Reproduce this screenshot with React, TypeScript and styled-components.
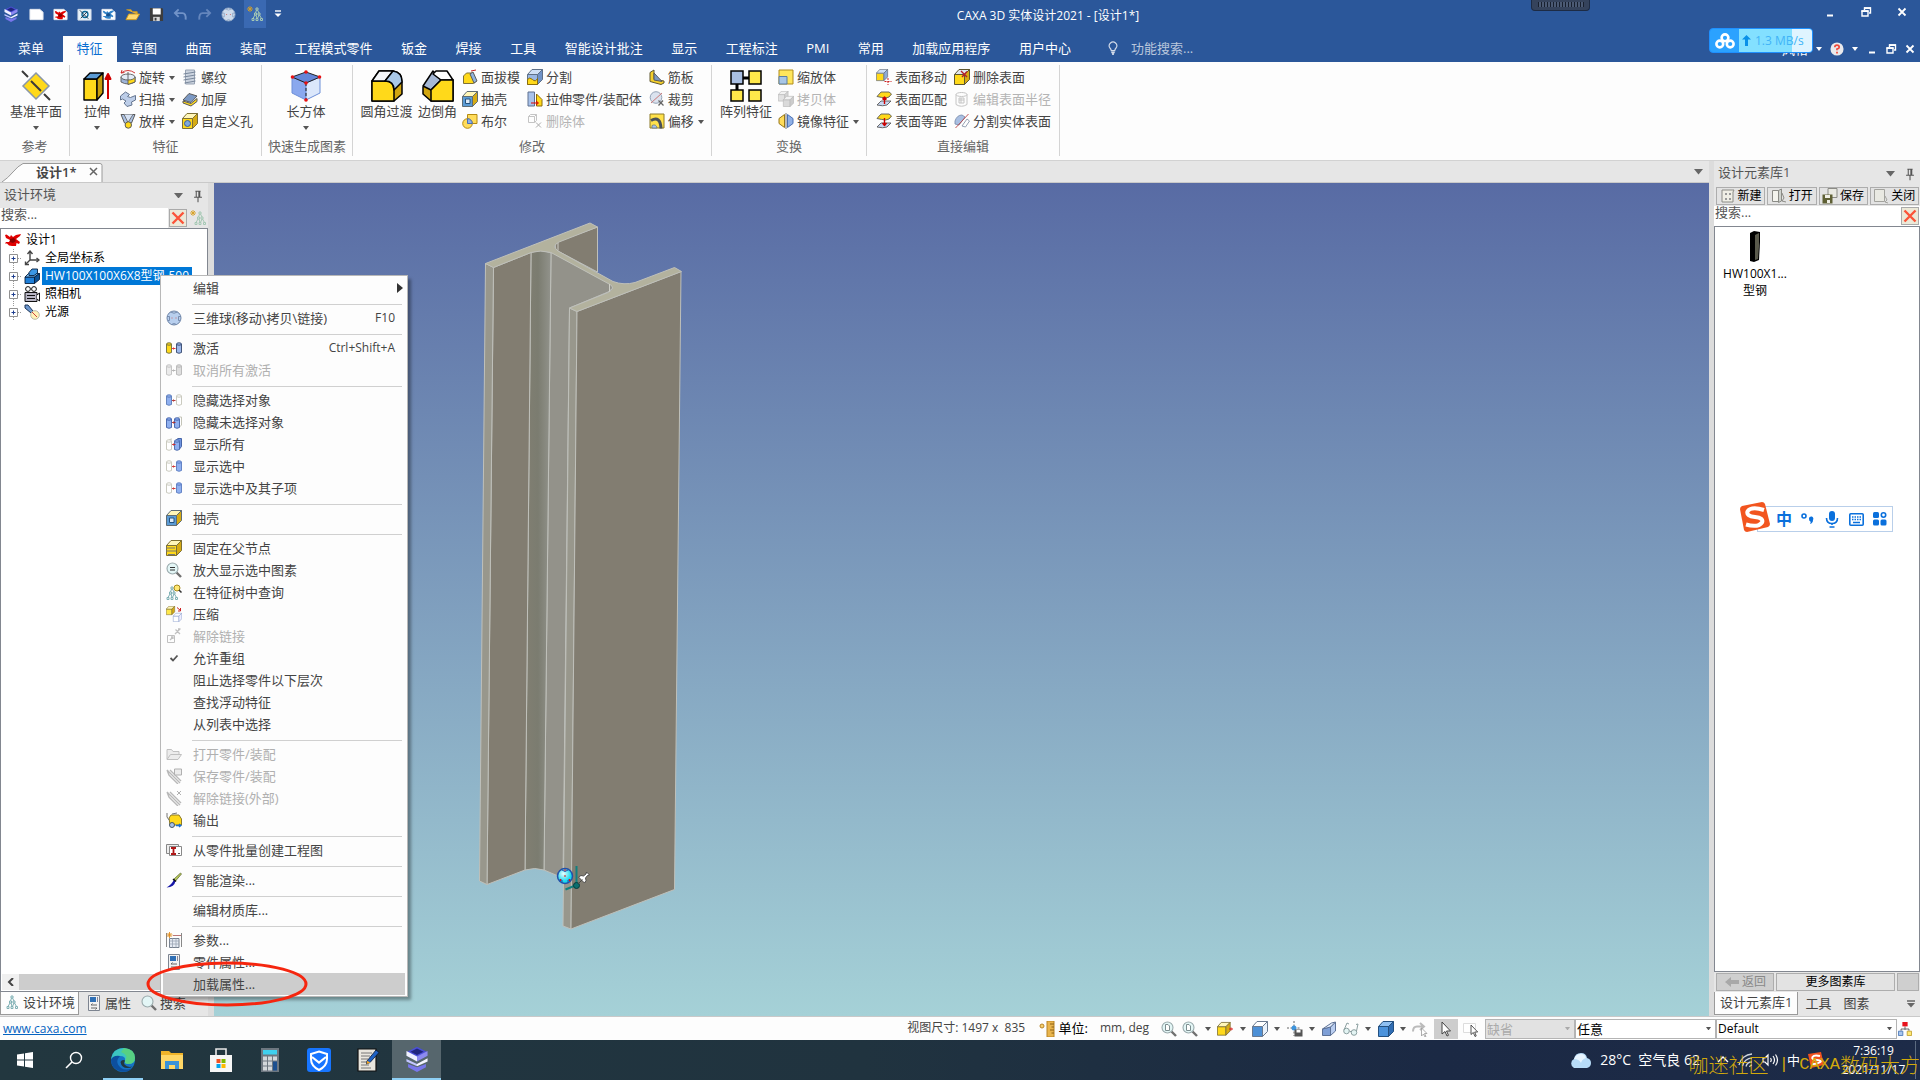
import React from "react";
import styled, { createGlobalStyle, css } from "styled-components";

const GlobalStyle = createGlobalStyle`
  *, *::before, *::after { box-sizing: border-box; }
  html, body { margin: 0; padding: 0; height: 100%; overflow: hidden; }
  body, button, input, select {
    font-family: "Open Sans", "Noto Sans CJK SC", sans-serif;
    font-size: 13px;
    line-height: 18px;
    color: #444;
  }
  button { border: 0; padding: 0; background: none; white-space: nowrap; }
  ul, h1, h2, p { margin: 0; padding: 0; list-style: none; font-weight: 400; font-size: 13px; }
  svg { display: block; flex: none; }
`;

/* ---------- drawings ---------- */

const INK = "#5a5a5a";

type CubeProps = { x?: number; y?: number; s?: number; top?: string; front?: string; side?: string; line?: string };
const Cube = ({ x = 0, y = 0, s = 1, top = "#fff6b8", front = "#ffd91a", side = "#d6ab14", line = "#7d7036" }: CubeProps) => (
  <g transform={`translate(${x} ${y}) scale(${s})`} stroke={line} strokeWidth={1} strokeLinejoin="round">
    <path d="M.5 5.500H10.500V15.500H.5Z" fill={front} />
    <path d="M.500 5.500L5 .500H15.500L10.500 5.500Z" fill={top} />
    <path d="M10.500 5.500L15.500 .500V10.500L10.500 15.500Z" fill={side} />
  </g>
);

const Can = ({ x, fill, line, y = 3 }: { x: number; fill: string; line: string; y?: number }) => (
  <g fill={fill} stroke={line} strokeWidth={0.9}>
    <path d={`M${x} ${y + 1}v8.500q2.500 1.600 5 0v-8.500`} />
    <ellipse cx={x + 2.5} cy={y + 1} rx={2.5} ry={1.2} />
  </g>
);

const RedLink = ({ c = "#c22" }: { c?: string }) => (
  <path d="M6.500 8.500h3M7.500 7.500l-1 1 1 1" stroke={c} fill="none" strokeWidth={0.9} />
);

const Sheet = () => <path d="M1 2.500H11.500l3.500 3V13.500H1Z" fill="#fff" stroke="#e2e6ee" />;

const Cross = ({ c }: { c: string }) => <path d="M2.500 2.500l11 11M13.500 2.500l-11 11" stroke={c} strokeWidth={2.4} />;

const Pyramid = ({ c = "#7fb0b4", x = 3, y = 2 }: { c?: string; x?: number; y?: number }) => (
  <g transform={`translate(${x} ${y})`} fill="none" stroke={c} strokeWidth={1}>
    <path d="M5 1h2v2H5zM3.500 6h2v2h-2zM7 6h2v2H7zM1 11.500h2v2H1zM5 11.500h2v2H5zM9.500 11.500h2v2h-2z" />
    <path d="M5.500 3L4.500 6M6.500 3l1.500 3M4 8l-2 3.500M5 8l1 3.500M8 8l-1.500 3.500M8.500 8l2 3.500" />
  </g>
);

const Magnifier = ({ inner }: { inner?: React.ReactNode }) => (
  <g>
    <path d="M10.500 10.500l4.500 4.500" stroke="#707070" strokeWidth={2.4} />
    <circle cx={6.500} cy={6.500} r={5.500} fill="#e3f6f6" stroke="#9aaaac" strokeWidth={1.1} />
    {inner}
  </g>
);

const Sphere = ({ fill = "#b8cfee", line = "#6f86a8" }: { fill?: string; line?: string }) => (
  <g stroke={line} fill="none">
    <circle cx={8} cy={8} r={7} fill={fill} />
    <path d="M4.500 2q3.500 2.500 7 0M1 6.500h2.500v4H2M15 6.500h-2.500v4H14M5.500 14.500q2.500-2 5 0" strokeWidth={0.9} />
    <path d="M5.500 8h1M9.500 8h1" stroke="#c66" />
  </g>
);

const Spider = ({ a = "#e00000", b = "#8c0000" }: { a?: string; b?: string }) => (
  <g>
    <path d="M0 3l1.500-.5L5 5l1-2 2 2 3-2 5-1-1 2-4 3 4 3-1 2-2.500-1L11 14H7l-3-.5-2-2H0l1-1.500h3L5 8 1 6z" fill={a} />
    <path d="M5 7l4-1 2 3-3 2-3-1z" fill={b} />
  </g>
);

const Pen = ({ c }: { c: string }) => (
  <g stroke={c} fill="none">
    <path d="M1 2l13 13M1 2l2 5 9 9M4 2l11 11" strokeWidth={1.4} />
  </g>
);

const Surface = ({ up }: { up: boolean }) => (
  <g strokeLinejoin="round" strokeWidth={0.9}>
    <path d="M1 14l4-4h10L11 14q-4 1.500-10 0z" fill="#c7d7f2" stroke={INK} />
    <path d="M1 5.500L5 1h8L15.500 3q-2 4-6 4-4-.5-8.500-1.500z" fill="#ffd91a" stroke={INK} />
    <path d={up ? "M8.500 13V6.500M6.500 8.500l2-2.500L10.500 8.500" : "M8.500 5v7M6.500 10l2 2.500L10.500 10"} stroke="#c00" strokeWidth={1.4} fill="none" />
  </g>
);

const glyphs: Record<string, React.ReactNode> = {
  logo: (
    <g strokeLinejoin="round">
      <path d="M8 .500l6 3v2.500L8 9 2 6V3.500z" fill="#4b4fd6" />
      <path d="M8 1.500l4 2L8 5.500l-4-2z" fill="#20257e" />
      <path d="M1.500 3L8 6.500v3L1.500 6z" fill="#f0f1ff" />
      <path d="M14.500 3L8 6.500v3L14.500 6z" fill="#8d8af0" />
      <path d="M1.500 8L8 11v1.500L1.500 9.500z" fill="#c3c6ff" />
      <path d="M14.500 7.500L8 11v1.500l6.500-3z" fill="#f4f5ff" />
      <path d="M2.500 11L8 13l5.500-2v2L8 16l-5.500-3z" fill="#7876ea" />
    </g>
  ),
  newdoc: <Sheet />,
  reddoc: <g><Sheet /><g transform="translate(2 2.500) scale(.75)"><Spider /></g></g>,
  sheetdoc: (
    <g><path d="M1 2.500H15V14H1Z" fill="#e9f4fb" stroke="#cfd9e6" /><circle cx={8.500} cy={8} r={3.200} fill="none" stroke="#0a6a9a" strokeWidth={1.400} /><path d="M3 3.500l9 9M4 12l7-7" stroke="#26374a" /></g>
  ),
  bluedoc: <g><Sheet /><g transform="translate(2 2) scale(.75)"><Spider a="#3585c9" b="#15508c" /></g></g>,
  folder: (
    <g><path d="M1.500 3h5l1.500 2h5v3" fill="#e5b63c" stroke="#d19b1e" /><path d="M1 13.500l3-6h11.500l-3.500 6z" fill="#ffdb72" stroke="#d19b1e" /></g>
  ),
  save: (
    <g><path d="M1 1h13l1 1v13H1z" fill="#3d3d3d" /><path d="M4 1.500h8.500V8H4z" fill="#fff" /><path d="M4.500 10.500h7v4.500h-7z" fill="#d9d9d9" /><path d="M6 11.500h2v3H6z" fill="#3d3d3d" /></g>
  ),
  undo: <path d="M6 2.500L2 6.500l4 4M2.500 6.500H10q4 0 3.500 7" stroke="#7193c8" strokeWidth={2} fill="none" />,
  redo: <path d="M10 2.500l4 4-4 4M13.500 6.500H6q-4 0-3.500 7" stroke="#6486bd" strokeWidth={2} fill="none" />,
  sphere: <Sphere />,
  spherePale: <Sphere fill="#cfdcec" line="#8ba3c4" />,
  treestar: <g><Pyramid c="#a5c8b4" x={4} y={1} /><path d="M3 0v6M0 3h6M1 1l4 4M5 1L1 5" stroke="#d8a022" strokeWidth={0.9} /></g>,
  tree: <Pyramid x={2} y={1} />,
  revolve: (
    <g strokeWidth={0.9}><path d="M1 8v5q7 4 14 0V8" fill="#9eb4d8" stroke={INK} /><path d="M8 9l7-1v5l-7 2.500z" fill="#ffd91a" stroke={INK} /><ellipse cx={8} cy={8} rx={7} ry={3} fill="#e3ebf6" stroke={INK} /><path d="M15 4Q8 -1 1 4M1 4l3.500-.5M1 4l1-3" stroke="#c22" fill="none" /><path d="M8 3v8" stroke={INK} /></g>
  ),
  sweep: <path d="M.500 5l5-4 4 2.500-2 2 3 1 5-2v4.500l-4 2 .5 3-5 1.500-3-3.500 2-2-3.500-2-2 1z" fill="#bccde8" stroke="#64758f" />,
  loft: <g><path d="M1 1.500h14L11.500 10q-3.500 4-7 0z" fill="#aac0e2" stroke={INK} /><path d="M4 1.500l4 8 5-8" fill="#d6e2f4" stroke={INK} strokeWidth={0.8} /><circle cx={8.300} cy={12} r={3.200} fill="#ffd91a" stroke={INK} /></g>,
  thread: <g><path d="M3.500 1h9v14h-9z" fill="#ccd4df" stroke="#97a2b2" /><path d="M1.500 5l12-2M1.500 8l12-2M1.500 11l12-2M2.500 14l11-2" stroke="#7a889c" /></g>,
  thicken: <g strokeLinejoin="round"><path d="M1 10l8 2.500 6-5v3l-6 4.500-8-3z" fill="#ffd91a" stroke={INK} /><path d="M1 9l6-6.500L15 5l-6 6.500z" fill="#7c99c4" stroke={INK} /></g>,
  hole: <g><Cube /><circle cx={5.500} cy={10.500} r={3} fill="#7fa8dc" stroke="#3a5f96" /></g>,
  draft: <g><path d="M1.500 7l3-3h6l3 9-2 1.500h-10z" fill="#ffd91a" stroke="#7d7036" /><path d="M8 5l3-2 4 9-3 2z" fill="#8fb3e0" stroke={INK} /><path d="M9 2l5-1" stroke="#c22" /></g>,
  shell: <g><Cube front="#5b9bd5" line="#5f6c74" /><path d="M3.500 8h4.500v4.500H3.500z" fill="#dceaf8" stroke="#24527f" /></g>,
  boolean: <g><path d="M5.500 1.500h9.500v9h-9.500z" fill="#ffdc5a" stroke="#b48a12" /><circle cx={5.500} cy={10.500} r={4.800} fill="#ffdc5a" stroke="#b48a12" /><path d="M5.500 5.700a4.800 4.800 0 0 1 4.800 4.800h-4.800z" fill="#8fb0e6" stroke="#4a70b4" /></g>,
  split: <g><Cube top="#cfe0f6" front="#9ab8e4" side="#6f93c8" line="#5f7088" /><path d="M.500 10.500q2-3 5 0t5-1v6H.500z" fill="#ffd91a" stroke="#8c6d0a" /></g>,
  pull: <g><path d="M1 1h6.500v14H1z" fill="#a8c2ea" stroke="#5f7090" /><path d="M9.500 3l5.500 5.500V15h-5.500z" fill="#ffd91a" stroke="#8c6d0a" /><path d="M4 12h7M9 10l2.500 2L9 14" stroke="#d00" fill="none" /></g>,
  delbody: <g stroke="#c4c4c4" fill="none"><path d="M1.500 3.500l2-2h6v6l-2 2h-6zM1.500 3.500h6v6M7.500 3.500l2-2" /><path d="M9 9.500l5 5M14 9.500l-5 5" stroke="#aaa" /></g>,
  rib: <g strokeLinejoin="round"><path d="M1 3.500L5 1v9l10 2v2l-3 1.500-11-3z" fill="#f5cf2a" stroke="#5f5730" /><path d="M5 4l8 8.500-8-1.500z" fill="#7c99c4" stroke={INK} /></g>,
  trim: <g><circle cx={7} cy={6.500} r={5.800} fill="#dbe3ef" stroke="#93a1b5" /><path d="M2 12L13 2" stroke="#c77" /><path d="M9.500 9.500l5 5M14 9.500l-4.500 5" stroke="#666" strokeWidth={1.300} /></g>,
  offset: <g><path d="M1 1h14v14H1z" fill="#ffe14a" stroke="#8c7a2a" /><path d="M2 7.500q9.500-5 10 8" fill="none" stroke="#4a5157" strokeWidth={3} /><path d="M3 12.500q4-2 5 2.500H3z" fill="#a9c4ea" stroke="#678" strokeWidth={0.8} /></g>,
  scale: <g><path d="M1 1h14v14H1z" fill="#ffe65c" stroke="#b08c1a" /><path d="M1 7.500h8V15H1z" fill="#a8c6e6" stroke="#5d7f9f" /></g>,
  copybody: <g><Cube s={0.65} top="#f2f2f2" front="#e2e2e2" side="#d5d5d5" line="#b8b8b8" /><Cube x={5} y={5} s={0.68} top="#f2f2f2" front="#dadada" side="#ccc" line="#b8b8b8" /></g>,
  mirror: <g><path d="M6.500 1.500v13l-5.500-4V5.500z" fill="#ffdc5a" stroke="#96761a" /><path d="M9.500 1.500v13l5.500-4V5.500z" fill="#8fb0e6" stroke="#4a70b4" /><path d="M8 0v16" stroke="#777" /></g>,
  facemove: <g><Cube s={0.75} top="#cfe0f6" side="#8fabd6" line="#6b7480" /><path d="M12 9v7M8.500 12.500h7" stroke="#c22" strokeDasharray="2 1" /></g>,
  facematch: <Surface up />,
  faceoffset: <Surface up={false} />,
  facedelete: <g><Cube top="#e1e6ed" line="#5f5730" /><path d="M7 2l6 6M13 2.500L8 8" stroke="#b3202c" strokeWidth={1.400} /></g>,
  faceradius: <g fill="none" stroke="#c4c4c4"><ellipse cx={7.500} cy={3.500} rx={5.500} ry={2} /><path d="M2 3.500v10q5.500 3.500 11 0v-10M5 7h5v5H5zM7 7v5M5 9h5" /></g>,
  facesplit: <g strokeWidth={0.9}><path d="M1 8q2-6 7-6l3 2-6 8-4-1z" fill="#a9bfe2" stroke="#7d8fae" /><path d="M8 13l5-7 2.500 2-4 6z" fill="#fff" stroke="#8a97ab" /><path d="M1.500 15L14.500 1" stroke="#b44" /></g>,
  activate: <g><Can x={0.500} fill="#ffd91a" line="#6b6b40" /><Can x={10.500} fill="#9db8ea" line="#33466b" /><RedLink c="#e02020" /></g>,
  deactivate: <g><Can x={0.500} fill="#ebebeb" line="#c0c0c0" /><Can x={10.500} fill="#dedede" line="#b5b5b5" /><RedLink c="#aaa" /></g>,
  hidesel: <g><Can x={0.500} fill="#8fb0f0" line="#5a7ab8" /><Can x={10.500} fill="#fff" line="#c4c4b8" /><RedLink c="#a22" /></g>,
  hideunsel: <g><Can x={0.500} y={4} fill="#8fb0f0" line="#3f5fa8" /><path d="M11 4.500l2-1.500h2.500v8l-2 2" fill="#fff" stroke="#c4c4b8" /><Can x={8.500} y={4} fill="#8fb0f0" line="#3f5fa8" /><RedLink c="#a22" /></g>,
  showall: <g><Can x={0.500} y={4} fill="#fff" line="#c4c4b8" /><path d="M3.500 3.500L6 3" stroke="#c4c4b8" /><path d="M9.500 4.500L12 2.500h3.500v8l-2 2.500" fill="#6f94e0" stroke="#4665a8" /><Can x={8.500} y={4} fill="#8fb0f0" line="#4665a8" /><RedLink c="#c22" /></g>,
  showsel: <g><Can x={0.500} fill="#fff" line="#c4c4b8" /><Can x={10.500} fill="#8fb0f0" line="#5a7ac0" /><RedLink c="#c22" /></g>,
  fixparent: <g><Cube /><path d="M0 8h9M0 11h10M2 14.500h7" stroke="#777" /></g>,
  zoomsel: <Magnifier inner={<path d="M4 5.500h5M4 8h5" stroke="#333" strokeWidth={1.200} />} />,
  findtree: <g><Pyramid x={0} y={2} /><circle cx={11} cy={4} r={3} fill="#ffe873" stroke="#a78a1c" /><path d="M13 6l2.500 2.500" stroke="#333" strokeWidth={1.500} /></g>,
  compress: <g><Cube s={0.56} front="#ffe84a" /><Cube x={7} y={7} s={0.56} top="#fff" front="#fff" side="#eef" line="#8ea2cf" /><path d="M11 1.500l3.500 3M14.500 2v3h-2.500" stroke="#c22" fill="none" /></g>,
  unlink: <g stroke="#c0c0c0" fill="none"><path d="M1.500 7.500h7v7h-7z" /><path d="M4 12l3-3M5 9h2v2M9 6l5-5M14 6L9.500 1.500M12 1h2.500" strokeWidth={1.300} /></g>,
  check: <path d="M4.500 8l2.500 2.500L11.500 5.500" stroke="#555" strokeWidth={1.800} fill="none" />,
  openpart: <g fill="#ececec" stroke="#c0c0c0"><path d="M1 13V3.500h4.500l1.500 2h6v3" /><path d="M1 13.500l3.500-5h11L12 13.500z" /></g>,
  savepart: <g><Pen c="#b8b8b8" /><path d="M8.500 1h7v6h-7z" fill="#ececec" stroke="#b0b0b0" /></g>,
  unlinkext: <g><Pen c="#b8b8b8" /><path d="M11 1l4 4M15 1l-4 4" stroke="#b0b0b0" /></g>,
  output: <g><path d="M3 6l2-3h8l2.500 4v6H4z" fill="#ffd91a" stroke="#8c7a2a" /><path d="M1 1v4l2 3M6 2l5-1" stroke="#777" fill="none" /><circle cx={6} cy={13} r={2.500} fill="#a8c2ea" stroke="#456" /><path d="M10 13.500h5M13 12l2 1.500-2 1.500" stroke="#1b6fd0" fill="none" strokeWidth={1.300} /></g>,
  batch: <g><path d="M.500 2.500h12v9H.500z" fill="#eee" stroke="#888" /><path d="M3.500 4.500h12v9h-12z" fill="#fff" stroke="#888" /><path d="M5 6h5M5 12h5M7.500 6v6" stroke="#b01818" strokeWidth={1.800} /><path d="M12 11.500h2" stroke="#555" /></g>,
  brush: <g><path d="M14.500 1L8 7l1.500 2L15.500 2z" fill="#b8c95a" stroke="#55602a" strokeWidth={0.700} /><path d="M8 7.500l1.500 1.500q-1 6-9 6.500 5-2.500 7.500-8z" fill="#1717a8" /><path d="M7 7l3 2.500" stroke="#111" strokeWidth={1.600} /></g>,
  params: <g><path d="M.500 1v14M15.500 1v14" stroke="#888" /><path d="M3.500 6.500h9.500v9H3.500z" fill="#e6ebf3" stroke="#76808e" /><path d="M3.500 9h9.500M3.500 12h9.500M6.500 6.500v9M10 6.500v9" stroke="#9aa4b4" strokeWidth={0.800} /><path d="M3.500 0v6M.500 3h6M1.500 1l4 4M5.500 1l-4 4" stroke="#e08b1a" strokeWidth={0.9} /><path d="M7 3.500h8" stroke="#b77" /></g>,
  props: <g><path d="M2.500.500h11v15h-11z" fill="#f2f2f2" stroke="#7d8490" /><path d="M4 2h6v5H4z" fill="#2f6fb5" /><path d="M11.500 2v5" stroke="#889" /><path d="M5 10h6M5 10l1.500-1.500M5 13h6l-1.500 1.500" stroke="#666" fill="none" /></g>,
  search: <Magnifier />,
  xred: <Cross c="#fb5439" />,
  axes: <g stroke="#444" strokeWidth={1.400} fill="none"><path d="M6 10V1.500M6 10h9M6 10l-4.500 4.500" /><path d="M3.500 4L6 1l2.500 3M12.500 8l2.500 2-2.500 2M1.500 11.500V14.500H5" /></g>,
  part: <g stroke="#07203f" strokeLinejoin="round" strokeWidth={0.9}><path d="M1 9h9.500v6.500H1z" fill="#1f7fd8" /><path d="M1 9l3.500-3.500h11L10.500 9z" fill="#7fc0f7" /><path d="M10.500 9l5-3.500v6l-5 4z" fill="#0d5296" /><path d="M5 7.500V4.500L8 1h5.500v4L10 7.500z" fill="#3c97e6" /></g>,
  camera: <g stroke="#111" fill="#fff"><circle cx={4} cy={3} r={2.400} /><circle cx={10} cy={3} r={2.400} /><path d="M1 6.500h12v9H1z" fill="#b7b5c4" /><path d="M13 9l2.500-2v8L13 13M3 9.500h8M3 12.500h8" /></g>,
  light: <g><path d="M1 1l3 0 5 6-2 2-6-5z" fill="#6d98d0" stroke="#1c3557" /><circle cx={11} cy={11} r={4.300} fill="#fff2b8" stroke="#bba" /><path d="M8 8l5 5" stroke="#c44" /></g>,
  zoomdoc: <Magnifier inner={<path d="M4.500 3.500h2.500l1.500 1.500v4.500h-4z" fill="#fff" stroke="#7d8e90" />} />,
  yellowcube: <g><Cube s={0.85} y={1} /><path d="M12 8h4M14 6.500v3" stroke="#d22" /></g>,
  bluecubeopen: <Cube top="#fff" front="#4d90d6" side="#eaf2fb" line="#6a7a90" />,
  bluecube: <Cube top="#8fc0f2" front="#4b92db" side="#2f6cb3" line="#24507f" />,
  viewsave: <g><path d="M7 0v15M0 7h13" stroke="#666" strokeDasharray="2 1.500" /><circle cx={7} cy={7} r={2.500} fill="#3f95dd" /><path d="M7.500 8.500h8v7h-8z" fill="#555" /><path d="M9.500 9h4v2.500h-4z" fill="#fff" /></g>,
  wedge: <g stroke="#5c7196" strokeLinejoin="round"><path d="M1.500 8l8-2v8.500h-8z" fill="#7e9fd6" /><path d="M9.500 6l5-5v9l-5 4.500z" fill="#b9cdf0" /><path d="M1.500 8l9-6 4-1-5 5z" fill="#e4edfb" /></g>,
  glasses: <g fill="#e3f4f3" stroke="#8b9fa0"><circle cx={3.500} cy={10} r={2.800} /><circle cx={11} cy={11.500} r={2.800} /><path d="M1 9L4 2l2 1M13.500 10L15 3l-2 .5M6.500 10l2 1" fill="none" /></g>,
  redocursor: <g><path d="M8 2l4 3.500L8 9M12 5.500H5q-4 0-4 5" stroke="#bbb" strokeWidth={2} fill="none" /><path d="M9.500 7v8l2-2 1.500 3 1-.5-1.500-3h2.500z" fill="#fff" stroke="#999" strokeWidth={0.800} /></g>,
  cursor: <path d="M4 1v12l3-2.500 2 4.500 1.500-.7-2-4.300h4z" fill="#fff" stroke="#444" />,
  cursorbox: <g><path d="M.500 2.500h12v9H.500z" fill="#fff" stroke="#ddd" /><path d="M8 4v9.500l2.300-2 1.700 4 1.200-.5-1.500-4h3z" fill="#fff" stroke="#444" strokeWidth={0.900} /></g>,
  ruler: <g><path d="M8 0h7v16H8z" fill="#e9b54d" stroke="#b78326" /><path d="M11 3h4M12.500 6H15M11 9h4M12.500 12H15" stroke="#8a5f14" /><circle cx={3} cy={5} r={2} fill="#f5cf6e" stroke="#b78326" /></g>,
  nodes: <g><path d="M8 5v4M3.500 10V8h9v2" stroke="#555" fill="none" /><path d="M5 0h6v5H5z" fill="#e8121c" /><path d="M.500 10.500h5v5h-5z" fill="#a8c6ee" stroke="#4a78b8" /><path d="M10.500 10.500h5v5h-5z" fill="#ffe873" stroke="#c0a030" /></g>,
  libnew: <g><path d="M2 2h12l-1 2v10H2z" fill="#f0efe6" stroke="#8b8b86" /><path d="M5 5h2v2H5zM9 5h2v2H9zM5 10h2v2H5zM9 10h2v2H9z" fill="#999" /></g>,
  libopen: <g stroke="#8b8b86"><path d="M1.500 2.500h6v11h-6z" fill="#f4f4ee" /><path d="M7.500 2.500l3-1.500v12l-3 1.500z" fill="#cfd3cf" /><path d="M11 5l2 5-2 3 4 1" fill="none" /></g>,
  libsave: <g><path d="M6 .500h9v9H6z" fill="#e9e9e2" stroke="#8b8b86" /><path d="M.500 6.500h10v9H.500z" fill="#5f6035" /><path d="M3 7h5v3H3zM5 12h3v3H5z" fill="#f0efe6" /></g>,
  libclose: <g stroke="#a3a39e"><path d="M1.500 1.500h10v12h-10z" fill="#e9e9e2" /><path d="M12 8l2 4-2 2 3 1" fill="none" /></g>,
  back: <path d="M1 8l6-5v3h8v4H7v3z" fill="#a8a8a8" />,
  pin: <path d="M5 2.500h6M6 3v6M10 3v6M9 3v6M3.500 9.500h9M8 10v5" stroke="#555" fill="none" strokeWidth={1.200} />,
  bulb: <g fill="none" stroke="#d4dcea" strokeWidth={1.300}><path d="M6 11q0-1.500-1.500-3A4.300 4.300 0 1 1 11.500 8Q10 9.500 10 11z" /><path d="M6 13h4M7 15h2" strokeWidth={2} /></g>,
  help: <g><circle cx={8} cy={8} r={7.500} fill="#e9e9ec" /><path d="M5.500 6q0-2.500 2.500-2.500T10.500 6Q10.500 7.500 8 8v1.500M8 11v2" stroke="#f04a3c" strokeWidth={2} fill="none" /></g>,
};

const Icon = ({ name, size = 16 }: { name: string; size?: number }) => (
  <svg width={size} height={size} viewBox="0 0 16 16" aria-hidden="true">{glyphs[name]}</svg>
);

const Caret = ({ color = "#555", size = 7 }: { color?: string; size?: number }) => (
  <svg width={size} height={size / 2 + 1} viewBox="0 0 8 4" preserveAspectRatio="none" aria-hidden="true"><path d="M0 0h8L4 4z" fill={color} /></svg>
);

const MinimizeGlyph = () => <svg width="12" height="12" viewBox="0 0 12 12"><path d="M3 9.500h6" stroke="#fff" strokeWidth="2" /></svg>;
const RestoreGlyph = () => <svg width="12" height="12" viewBox="0 0 12 12"><path d="M4.500 4V2h6v5H9M2 5h6v5H2z" stroke="#fff" strokeWidth="1.400" fill="none" /><path d="M4 2.200h7M1.500 5.200h7" stroke="#fff" strokeWidth="1.800" /></svg>;
const CloseGlyph = () => <svg width="12" height="12" viewBox="0 0 12 12"><path d="M2.500 2.500l7 7M9.500 2.500l-7 7" stroke="#fff" strokeWidth="1.800" /></svg>;

/* large ribbon drawings, 32 × 32 */
const bigGlyphs: Record<string, React.ReactNode> = {
  plane: <g><path d="M16 3l13 13-13 13L3 16z" fill="#ffd91a" stroke="#8a97a8" strokeWidth="1.500" /><path d="M2 1l6 6M11 11l10 10M24 24l6 6" stroke="#3a3a3a" strokeWidth="2" /></g>,
  extrude: <g strokeLinejoin="round" stroke="#000" strokeWidth="1.400"><path d="M3 9h13v21H3z" fill="#ffd91a" /><path d="M3 9l6-6h13l-6 6z" fill="#5b9bd5" /><path d="M16 9l6-6v20l-6 7z" fill="#c79d0c" /><path d="M27 29V5M24.500 9L27 4l2.500 5z" stroke="#d00000" fill="#d00000" strokeWidth="2" /></g>,
  box: <g strokeLinejoin="round"><path d="M2 7l14 6v17L2 23z" fill="#8aa8ee" stroke="#6d8fd8" /><path d="M30 7l-14 6v17l14-7z" fill="#dbe7fb" stroke="#6d8fd8" /><path d="M2 7l14-5 14 5-14 6z" fill="#6486d8" stroke="#222" /><path d="M16 13v17" stroke="#222" strokeDasharray="3 2" /><g fill="#e81010"><circle cx="2.500" cy="7" r="1.800" /><circle cx="16" cy="2" r="1.800" /><circle cx="29.500" cy="7" r="1.800" /><circle cx="16" cy="13" r="1.800" /><circle cx="16" cy="30" r="1.800" /></g></g>,
  fillet: <g stroke="#000" strokeWidth="1.500" strokeLinejoin="round"><path d="M1 11L8 1h14q9 1 9 11v12l-8 7H1z" fill="#d1a510" /><path d="M1 11v20h22V20q0-9-9-9z" fill="#ffd91a" /><path d="M1 11L8 1h14l-8 10z" fill="#f5f7fa" /><path d="M14 11l8-10q9 1 9 11l-8 8q0-9-9-9z" fill="#a9c8e8" /></g>,
  chamfer: <g stroke="#000" strokeWidth="1.500" strokeLinejoin="round"><path d="M1 17l10-7h20v21H9l-8-7z" fill="#d1a510" /><path d="M1 16L11 1l8 9L9 20z" fill="#a5b8d6" /><path d="M11 4l3-3h11l6 9H19z" fill="#fff" /><path d="M19 10h12v21H9V20z" fill="#ffd91a" /></g>,
  pattern: <g stroke="#000" strokeWidth="1.500"><path d="M7 14v6M13 8h6" strokeWidth="3" /><path d="M1 1h12v13H1z" fill="#a9bfe2" /><path d="M19 1h12v13H19zM1 20h12v11H1zM19 20h12v11H19z" fill="#ffe84a" /></g>,
};

/* ---------- frame ---------- */

const Shell = styled.div`
  position: relative;
  display: flex;
  flex-direction: column;
  height: 100vh;
  overflow: hidden;
  background: #e6e6e6;
`;

const TitleBar = styled.header`
  display: flex;
  height: 36px;
  background: #2b579a;
  color: #fff;
`;
const QuickBar = styled.div`
  display: flex;
  gap: 8px;
  width: 284px;
  padding-left: 2px;
  height: 28px;
`;
const QuickButton = styled.button<{ $w?: number; $active?: boolean }>`
  display: grid;
  place-items: center;
  width: ${(p) => p.$w ?? 16}px;
  background: ${(p) => (p.$active ? "#3a69b2" : "transparent")};
`;
const WindowTitle = styled.h1`
  flex: 1;
  padding-top: 7px;
  text-align: center;
  font-size: 12px;
  line-height: 18px;
`;
const WindowControls = styled.div`
  display: flex;
  width: 108px;
  height: 24px;
`;
const WindowButton = styled.button`
  flex: 1;
  display: grid;
  place-items: center;
`;

const TabBar = styled.nav`
  display: flex;
  align-items: flex-end;
  height: 26px;
  background: #2b579a;
`;
const TabList = styled.div`
  display: flex;
  justify-content: space-between;
  width: 1085px;
`;
const RibbonTab = styled.button<{ $active?: boolean; $first?: boolean }>`
  height: 26px;
  padding: 0 ${(p) => (p.$first ? 18 : 14)}px 2px;
  color: ${(p) => (p.$active ? "#0a6ed1" : "#fff")};
  background: ${(p) => (p.$active ? "#fdfdfd" : "transparent")};
`;
const CommandSearch = styled.label`
  display: flex;
  align-items: center;
  gap: 11px;
  height: 26px;
  padding: 0 0 2px 21px;
`;
const CommandInput = styled.input`
  width: 120px;
  border: 0;
  padding: 0;
  background: none;
  outline: none;
  &::placeholder { color: #b9c6dc; opacity: 1; }
`;
const ChildControls = styled.div`
  display: flex;
  align-items: center;
  gap: 7px;
  height: 26px;
  margin-left: auto;
  padding-right: 4px;
  color: #fff;
  button { display: grid; place-items: center; min-width: 8px; height: 20px; color: #fff; }
`;

/* ---------- ribbon ---------- */

const Ribbon = styled.section`
  display: flex;
  height: 99px;
  padding: 3px 0 4px;
  background: #fdfdfd;
  border-bottom: 1px solid #d2d2d2;
  flex: none;
`;
const Group = styled.div<{ $w: number }>`
  display: flex;
  flex-direction: column;
  justify-content: space-between;
  width: ${(p) => p.$w}px;
  border-right: 1px solid #d4d4d4;
`;
const ToolColumn = styled.div`
  display: grid;
  grid-template-rows: repeat(3, 22px);
  justify-items: start;
  padding-top: 1px;
`;
const GroupTools = styled.div<{ $pad: number }>`
  display: flex;
  gap: 5px;
  padding-left: ${(p) => p.$pad}px;
  ${ToolColumn} + ${ToolColumn} { margin-left: 2px; }
`;
const GroupLabel = styled.h2`
  padding-bottom: 1px;
  text-align: center;
  color: #666;
  line-height: 18px;
`;
const BigButton = styled.button<{ $w: number }>`
  display: flex;
  flex-direction: column;
  align-items: center;
  width: ${(p) => p.$w}px;
  padding-top: 5px;
  svg + span { margin: 0 0 6px; }
`;
const Tool = styled.button`
  display: flex;
  align-items: center;
  gap: 3px;
  svg:last-child:not(:first-child) { margin: 2px 0 0 1px; }
  &:disabled { color: #b4b4b4; }
`;

type ToolDef = [icon: string, label: string, flag?: "menu" | "off"];
const Tools = ({ items }: { items: ToolDef[] }) => (
  <ToolColumn>
    {items.map(([icon, label, flag]) => (
      <Tool key={label} disabled={flag === "off"}>
        <Icon name={icon} />
        <span>{label}</span>
        {flag === "menu" && <Caret size={6} />}
      </Tool>
    ))}
  </ToolColumn>
);
const Big = ({ icon, label, w, menu }: { icon: string; label: string; w: number; menu?: boolean }) => (
  <BigButton $w={w}>
    <svg width="32" height="32" viewBox="0 0 32 32" aria-hidden="true">{bigGlyphs[icon]}</svg>
    <span>{label}</span>
    {menu && <Caret size={6} />}
  </BigButton>
);

/* ---------- work area ---------- */

const Work = styled.main`
  flex: 1;
  display: flex;
  min-height: 0;
`;
const Documents = styled.div`
  flex: 1;
  display: flex;
  flex-direction: column;
  min-width: 0;
`;
const DocStrip = styled.div`
  display: flex;
  align-items: flex-end;
  justify-content: space-between;
  height: 22px;
  padding: 0 6px 0 2px;
  border-bottom: 1px solid #c9c9c9;
`;
const DocTab = styled.div`
  display: grid;
  grid-template: 19px / 101px;
  > * { grid-area: 1 / 1; }
`;
const DocTabContent = styled.div`
  display: flex;
  align-items: center;
  gap: 12px;
  padding: 0 0 2px 34px;
  font-weight: 600;
`;
const StripMenu = styled.button`
  height: 20px;
  display: grid;
  place-items: center;
`;
const DocRow = styled.div`
  flex: 1;
  display: flex;
  min-height: 0;
`;
const SidePanel = styled.aside<{ $w: number }>`
  display: flex;
  flex-direction: column;
  width: ${(p) => p.$w}px;
  flex: none;
`;
const PanelHeader = styled.div<{ $h: number }>`
  display: flex;
  align-items: center;
  gap: 8px;
  height: ${(p) => p.$h}px;
  padding: 0 3px 0 4px;
  flex: none;
  color: #555;
  h2 { flex: 1; padding-bottom: 4px; }
`;
const SearchRow = styled.div<{ $white?: boolean }>`
  display: flex;
  align-items: center;
  height: 20px;
  flex: none;
  background: ${(p) => (p.$white ? "#fff" : "none")};
`;
const SearchField = styled.input`
  flex: 1;
  min-width: 0;
  height: 20px;
  padding: 0 1px 8px;
  border: 0;
  outline: none;
  background: #fff;
  &::placeholder { color: #555; opacity: 1; }
`;
const ClearButton = styled.button`
  display: grid;
  place-items: center;
  width: 18px;
  height: 18px;
  margin: 0 1px;
  background: #ece9d8;
  border: 1px solid #aaa;
`;
const TreeIconButton = styled.button`
  width: 20px;
  display: grid;
  place-items: center;
`;
const TreeBox = styled.div`
  flex: 1;
  display: flex;
  flex-direction: column;
  justify-content: space-between;
  min-height: 0;
  padding: 2px 1px 1px;
  background: #fff;
  border: 1px solid #828790;
`;
const TreeRow = styled.li<{ $child?: boolean }>`
  display: flex;
  align-items: center;
  gap: 2px;
  height: 18px;
  padding-left: ${(p) => (p.$child ? 7 : 3)}px;
  font-size: 12px;
  color: #000;
`;
const Expander = styled.button`
  display: flex;
  width: 13px;
`;
const TreeLabel = styled.span<{ $selected?: boolean }>`
  padding: 0 3px;
  white-space: nowrap;
  ${(p) => p.$selected && css`background: #0078d7; color: #fff;`}
`;
const HScroll = styled.div`
  display: flex;
  height: 16px;
  background: #f0f0f0;
`;
const ScrollArrow = styled.button`
  width: 17px;
  display: grid;
  place-items: center;
`;
const ScrollThumb = styled.div`
  flex: 1;
  background: #cdcdcd;
`;
const PanelTab = styled.button<{ $active?: boolean }>`
  display: flex;
  align-items: center;
  gap: 3px;
  height: 23px;
  padding-bottom: 2px;
  ${(p) => p.$active && css`background: #fdfdfd; border: 1px solid #9a9a9a; border-top: 0;`}
`;
const PanelTabs = styled.div<{ $gap: number; $pad: number }>`
  display: flex;
  align-items: flex-start;
  height: 24px;
  gap: ${(p) => p.$gap}px;
  flex: none;
  ${PanelTab} { padding-left: ${(p) => p.$pad}px; padding-right: ${(p) => p.$pad}px; }
`;
const MoreTabs = styled.button`
  display: grid;
  place-items: center;
  width: 18px;
  height: 23px;
  margin-left: auto;
`;
const Splitter = styled.div<{ $w: number }>`
  width: ${(p) => p.$w}px;
  flex: none;
  background: #dcdcdc;
`;
const Viewport = styled.section`
  flex: 1;
  min-width: 0;
  overflow: hidden;
  background: linear-gradient(#586ba4, #a5d1d7);
`;

const LibToolbar = styled.div`
  display: flex;
  gap: 2px;
  height: 19px;
  padding: 0 1px 1px 2px;
  flex: none;
`;
const LibButton = styled.button<{ $grow?: number; $muted?: boolean }>`
  display: flex;
  align-items: center;
  justify-content: center;
  gap: 2px;
  flex: ${(p) => p.$grow ?? 1} 1 0;
  min-width: 0;
  height: 18px;
  overflow: hidden;
  font-size: 12px;
  color: ${(p) => (p.$muted ? "#888" : "#000")};
  background: ${(p) => (p.$muted ? "#cfcfcf" : "#e3e3e3")};
  border: 1px solid #adadad;
`;
const LibList = styled.ul`
  flex: 1;
  margin-bottom: 1px;
  background: #fff;
  border: 1px solid #828790;
`;
const LibItem = styled.li`
  display: flex;
  flex-direction: column;
  align-items: center;
  width: 80px;
  padding-top: 4px;
  font-size: 12px;
  line-height: 17px;
  color: #000;
  svg { margin-bottom: 3px; }
`;

/* ---------- status bar ---------- */

const StatusBar = styled.footer`
  display: flex;
  align-items: center;
  height: 24px;
  flex: none;
  background: #fdfdfd;
  border-top: 1px solid #c9c9c9;
`;
const SiteLink = styled.a`
  padding-left: 3px;
  color: #0563c1;
  font-size: 12px;
`;
const StatusRight = styled.div`
  display: flex;
  align-items: center;
  margin-left: auto;
  padding-right: 7px;
`;
const StatusText = styled.span<{ $gap: number; $dark?: boolean }>`
  margin-right: ${(p) => p.$gap}px;
  padding-bottom: 2px;
  white-space: pre;
  font-size: ${(p) => (p.$dark ? 13 : 12)}px;
  color: ${(p) => (p.$dark ? "#000" : "#444")};
`;
const StatusTools = styled.div`
  display: flex;
  align-items: center;
  width: 324px;
  justify-content: space-between;
  padding-right: 6px;
`;
const StatusTool = styled.button<{ $active?: boolean }>`
  display: grid;
  place-items: center;
  width: ${(p) => (p.$active ? 24 : 16)}px;
  height: 20px;
  background: ${(p) => (p.$active ? "#cdcdcd" : "none")};
`;
const StatusCaret = styled.button`
  display: grid;
  place-items: center;
  width: 8px;
  height: 20px;
`;
const Pick = styled.label<{ $w: number }>`
  display: grid;
  align-items: center;
  width: ${(p) => p.$w}px;
  > * { grid-area: 1 / 1; }
  svg { justify-self: end; margin-right: 5px; pointer-events: none; z-index: 1; }
`;
const PickSelect = styled.select<{ $small?: boolean }>`
  appearance: none;
  width: 100%;
  height: 20px;
  padding: 0 1px;
  font-size: ${(p) => (p.$small ? 12 : 13)}px;
  color: #000;
  background: #fff;
  border: 1px solid #b4b4b4;
  border-radius: 0;
  &:disabled { color: #aaa; background: #e2e2e2; opacity: 1; }
`;

/* ---------- Windows taskbar ---------- */

const Taskbar = styled.footer`
  display: flex;
  height: 40px;
  flex: none;
  background: linear-gradient(90deg, #22373f, #20333f 45%, #1b2944 75%, #1d2b48);
  color: #fff;
`;
const TaskButton = styled.button<{ $running?: boolean; $active?: boolean }>`
  display: grid;
  place-items: center;
  width: 49px;
  height: 40px;
  background: ${(p) => (p.$active ? "#56666d" : "none")};
  ${(p) => p.$active && css`border-bottom: 2px solid #8fd0f5;`}
  ${(p) => p.$running && css`
    background: linear-gradient(#8fd0f5, #8fd0f5) center bottom / 40px 2px no-repeat;
  `}
`;
const Tray = styled.div`
  display: flex;
  align-items: center;
  gap: 8px;
  margin-left: auto;
  padding-right: 4px;
`;
const Weather = styled.button`
  display: flex;
  align-items: center;
  gap: 9px;
  margin-right: 8px;
  color: #fff;
  font-size: 14px;
`;
const Clock = styled.time`
  width: 84px;
  text-align: center;
  font-size: 12px;
  line-height: 19px;
  border-right: 1px solid #5b6a80;
`;

/* ---------- context menu ---------- */

const ContextMenu = styled.div`
  position: absolute;
  left: 160px;
  top: 276px;
  width: 248px;
  padding: 1px 2px;
  background: #fdfdfd;
  border: 1px solid #b8b8b8;
  border-top-width: 0;
  box-shadow: 0 -1px 0 #b8b8b8, 3px 3px 3px rgba(0, 0, 0, 0.35);
`;
const MenuRow = styled.button<{ $hover?: boolean; $sub?: boolean }>`
  display: grid;
  grid-template-columns: 27px 1fr auto;
  align-items: center;
  width: 100%;
  height: 22px;
  padding: 0 ${(p) => (p.$sub ? 2 : 10)}px 0 3px;
  text-align: left;
  background: ${(p) => (p.$hover ? "#cdcdcd" : "none")};
  &:disabled { color: #b0b0b0; }
  kbd { font: inherit; font-size: 12px; }
`;
const MenuRule = styled.hr`
  margin: 5px 3px 2px 29px;
  border: 0;
  border-top: 1px solid #d0d0d0;
`;

type MenuDef = { icon?: string; label: string; keys?: string; off?: boolean; sub?: boolean; hover?: boolean };
const menuSections: MenuDef[][] = [
  [{ label: "编辑", sub: true }],
  [{ icon: "sphere", label: "三维球(移动\\拷贝\\链接)", keys: "F10" }],
  [{ icon: "activate", label: "激活", keys: "Ctrl+Shift+A" }, { icon: "deactivate", label: "取消所有激活", off: true }],
  [
    { icon: "hidesel", label: "隐藏选择对象" },
    { icon: "hideunsel", label: "隐藏未选择对象" },
    { icon: "showall", label: "显示所有" },
    { icon: "showsel", label: "显示选中" },
    { icon: "showsel", label: "显示选中及其子项" },
  ],
  [{ icon: "shell", label: "抽壳" }],
  [
    { icon: "fixparent", label: "固定在父节点" },
    { icon: "zoomsel", label: "放大显示选中图素" },
    { icon: "findtree", label: "在特征树中查询" },
    { icon: "compress", label: "压缩" },
    { icon: "unlink", label: "解除链接", off: true },
    { icon: "check", label: "允许重组" },
    { label: "阻止选择零件以下层次" },
    { label: "查找浮动特征" },
    { label: "从列表中选择" },
  ],
  [
    { icon: "openpart", label: "打开零件/装配", off: true },
    { icon: "savepart", label: "保存零件/装配", off: true },
    { icon: "unlinkext", label: "解除链接(外部)", off: true },
    { icon: "output", label: "输出" },
  ],
  [{ icon: "batch", label: "从零件批量创建工程图" }],
  [{ icon: "brush", label: "智能渲染..." }],
  [{ label: "编辑材质库..." }],
  [
    { icon: "params", label: "参数..." },
    { icon: "props", label: "零件属性..." },
    { label: "加载属性...", hover: true },
  ],
];

/* ---------- desktop overlays ---------- */

const Annotation = styled.svg`
  position: absolute;
  left: 145px;
  top: 960px;
  pointer-events: none;
`;
const SpeedWidget = styled.div`
  position: absolute;
  right: 107px;
  top: 28px;
  display: flex;
  width: 104px;
  height: 25px;
  border: 1px solid #1e90ff;
  border-radius: 4px;
  overflow: hidden;
  background: #2ba2ff;
`;
const SpeedLogo = styled.div`
  width: 29px;
  display: grid;
  place-items: center;
`;
const SpeedValue = styled.div`
  flex: 1;
  display: flex;
  align-items: center;
  gap: 4px;
  padding-left: 3px;
  white-space: nowrap;
  font-size: 12px;
  color: #41b4f7;
  background: linear-gradient(90deg, #83e0ff 72%, #dff4ff 73%);
`;
const TopHandle = styled.div`
  position: absolute;
  right: 330px;
  top: 0;
  width: 59px;
  height: 11px;
  padding: 2px 6px 3px;
  border: 1px solid #1d2b44;
  border-top: 0;
  border-radius: 0 0 4px 4px;
  background: #35435c;
  &::before { content: ""; display: block; width: 46px; height: 5px; background: repeating-linear-gradient(90deg, #18202f 0 1px, #4b5a74 1px 3px); }
`;
const ImeBar = styled.div`
  position: absolute;
  right: 27px;
  top: 506px;
  display: flex;
  align-items: center;
  gap: 6px;
  width: 136px;
  height: 26px;
  padding-left: 17px;
  background: #fff;
  border: 1px solid #b9cfea;
`;
const ImeLogo = styled.svg`
  position: absolute;
  left: -19px;
  top: -6px;
`;
const ImeKey = styled.button`
  display: grid;
  place-items: center;
  width: 18px;
  height: 24px;
  color: #0a70dc;
  font-size: 16px;
  font-weight: 700;
`;
const Watermark = styled.p`
  position: absolute;
  right: 0;
  bottom: 1px;
  display: flex;
  align-items: center;
  font-family: "Noto Sans CJK SC", sans-serif;
  font-size: 20px;
  font-weight: 300;
  line-height: 28px;
  color: #d2a90c;
  pointer-events: none;
  white-space: pre;
  span { font-family: "Liberation Mono", monospace; font-size: 17px; }
`;

const Beam = () => (
  <svg width="600" height="833" viewBox="214 183 600 833" role="img" aria-label="HW100X100X6X8型钢">
    <defs>
      <linearGradient id="fillet" x1="0" x2="1"><stop offset="0" stopColor="#817f72" /><stop offset=".5" stopColor="#7b7c70" /><stop offset="1" stopColor="#92938c" /></linearGradient>
      <radialGradient id="ball" cx=".4" cy=".35"><stop offset="0" stopColor="#e8ffff" /><stop offset="1" stopColor="#1ad8ee" /></radialGradient>
    </defs>
    <g stroke="#bfc0ba" strokeWidth="1" strokeLinejoin="round">
      <path d="M597.500 227V272L556 250L555 244L559 241Z" fill="#827d71" />
      <path d="M551 252L611 284L613 288L608 292L569.500 308L563 878L544 870Z" fill="#93928a" />
      <path d="M531 252.500Q541 249 551 253L544 870Q535 867 525 870Z" fill="url(#fillet)" />
      <path d="M493.500 267.500L531 252.500L525 870L487 884.500Z" fill="#827d71" />
      <path d="M485.500 263.500L493.500 267.500L487 884.500L479.500 881Z" fill="#98978c" />
      <path d="M569.500 308L577 311.500L571 929L563 926Z" fill="#98978c" />
      <path d="M577 311.500L681 271.500L674.500 889.500L571 929Z" fill="#827d71" />
      <path d="M485.500 263.500L590 223L597.500 227L559 242Q551 246 558 251L613 281.500Q624 285.500 635 282.500L674.500 267.500L681.500 271.500L577 311.500L569.500 308L608 292.500Q616 288 610 284.500L551 252.500Q540 249.500 531 252.500L493.500 267.500Z" fill="#b3b29e" />
    </g>
    <path d="M558 243v7.500M609.500 284v7.500" stroke="#d0d0c8" />
    <path d="M576.500 866v19l-11 4.500" stroke="#128080" strokeWidth="2" fill="none" />
    <circle cx="576.500" cy="885.500" r="3" fill="#0b6e6e" stroke="#043c3c" />
    <circle cx="565" cy="876" r="7.500" fill="url(#ball)" stroke="#2451a8" strokeWidth="1.500" />
    <path d="M562 870q3 3 6 0M559 880h3v3M571 880h-3v3" stroke="#2451a8" fill="none" />
    <path d="M564.500 870h1M564.500 876h1M560 880h1M569 880h1" stroke="#e01010" strokeWidth="2" />
    <path d="M578 884l4.500-4.500M578.500 877l2.500-1.500 2.500.5 2.500-2 .5-2 3 3-2 .5-2 2.500.5 2.500-1.500 2.500z" fill="#fff" stroke="#444" strokeWidth=".9" />
  </svg>
);

const Expand = () => (
  <Expander aria-label="展开">
    <svg width="13" height="18" viewBox="0 0 13 18"><path d="M4.500 0v4M4.500 14v4M9 9.500h4" stroke="#999" strokeDasharray="1 1" /><path d="M.500 5.500h8v8h-8z" fill="#fff" stroke="#919191" /><path d="M2.500 9.500h4M4.500 7.500v4" stroke="#1f3f8f" /></svg>
  </Expander>
);

const treeItems = [
  { icon: "axes", label: "全局坐标系" },
  { icon: "part", label: "HW100X100X6X8型钢-500", selected: true },
  { icon: "camera", label: "照相机" },
  { icon: "light", label: "光源" },
];

const tabs = ["菜单", "特征", "草图", "曲面", "装配", "工程模式零件", "钣金", "焊接", "工具", "智能设计批注", "显示", "工程标注", "PMI", "常用", "加载应用程序", "用户中心"];
const quick = ["newdoc", "reddoc", "sheetdoc", "bluedoc", "folder", "save", "undo", "redo", "spherePale"];

const taskIcons: { label: string; running?: boolean; active?: boolean; art: React.ReactNode }[] = [
  { label: "开始", art: <svg width="16" height="16" viewBox="0 0 16 16"><path d="M0 2.500l7-1v6H0zM8 1.300L16 0v7.500H8zM0 8.500h7v6l-7-1zM8 8.500h8V16l-8-1.300z" fill="#fff" /></svg> },
  { label: "搜索", art: <svg width="18" height="18" viewBox="0 0 18 18"><circle cx="11" cy="7" r="5.500" fill="none" stroke="#fff" strokeWidth="1.400" /><path d="M7 11l-6 6" stroke="#fff" strokeWidth="1.600" /></svg> },
  { label: "Edge", running: true, art: <svg width="24" height="24" viewBox="0 0 24 24"><circle cx="12" cy="12" r="12" fill="#1673c4" /><path d="M0 11Q2 0 13 0q11 1 11 10 0 6-7 6-4 0-3-3 1-5-5-5-6 0-9 3z" fill="#3cc6c0" /><path d="M13 0q11 1 11 10 0 6-7 6-4 0-3-3 4-6-4-9z" fill="#62d66a" opacity=".7" /><path d="M9 8q-6 6 1 12 5 3 11 0-4 5-11 3.500Q0 21 0 12q2-5 9-4z" fill="#0d4f9e" /><path d="M9.500 14q1 6 7 6 3 0 5-1.500-5 1.500-8-2-1-2 .5-4-3-1.500-4.500 1.500z" fill="#22373f" /></svg> },
  { label: "文件资源管理器", art: <svg width="22" height="20" viewBox="0 0 22 20"><path d="M0 1h8l2 2h12v16H0z" fill="#f0b429" /><path d="M0 5h22v14H0z" fill="#ffd766" /><path d="M4 19v-8h14v8h-4v-4H8v4z" fill="#3a93d8" /></svg> },
  { label: "Microsoft Store", art: <svg width="24" height="24" viewBox="0 0 24 24"><path d="M7 7V1h10v6" fill="none" stroke="#e8e8e8" strokeWidth="1.600" /><path d="M1 7h22v17H1z" fill="#f6f6f6" /><path d="M7.500 11h4v4h-4z" fill="#f25022" /><path d="M12.500 11h4v4h-4z" fill="#7fba00" /><path d="M7.500 16h4v4h-4z" fill="#00a4ef" /><path d="M12.500 16h4v4h-4z" fill="#ffb900" /></svg> },
  { label: "计算器", art: <svg width="18" height="24" viewBox="0 0 18 24"><path d="M0 0h18v24H0z" fill="#6d7780" /><path d="M2 2h14v4.500H2z" fill="#3fd0ee" /><path d="M2 8.500h4v4H2zM7 8.500h4v4H7zM12 8.500h4v4h-4zM2 13.500h4v4H2zM7 13.500h4v4H7zM2 18.500h4v4H2zM7 18.500h4v4H7z" fill="#d3d8db" /><path d="M12 13.500h4v9h-4z" fill="#1b4f8f" /></svg> },
  { label: "电脑管家", art: <svg width="24" height="24" viewBox="0 0 24 24"><rect width="24" height="24" rx="3" fill="#1775ff" /><path d="M12 3.500l8 2.500v5q0 7-8 11-8-4-8-11V6z" fill="none" stroke="#fff" strokeWidth="2" /><path d="M5 9l7 5.500L19 9" fill="none" stroke="#fff" strokeWidth="2.200" /></svg> },
  { label: "记事本", art: <svg width="24" height="24" viewBox="0 0 24 24"><path d="M2 1h18v22H2z" fill="#e9e7df" stroke="#111" strokeWidth="1.200" /><path d="M5 5h11M5 8h9M5 11h7M5 14h6M5 17h8M5 20h10" stroke="#777" strokeWidth="1" /><path d="M11 13l9-11 3 2.500-9 10-3.500 1.500z" fill="#1f62c4" stroke="#0a1a33" strokeWidth=".8" /><path d="M10.500 16l.8-3.300 3 2z" fill="#f5a623" /></svg> },
  { label: "CAXA 3D", active: true, art: <Icon name="logo" size={26} /> },
];

export default function App() {
  return (
    <Shell>
      <GlobalStyle />
      <TitleBar>
        <QuickBar>
          <QuickButton $w={18} aria-label="CAXA"><Icon name="logo" /></QuickButton>
          {quick.map((n) => <QuickButton key={n} aria-label={n}><Icon name={n} size={15} /></QuickButton>)}
          <QuickButton $active $w={22} aria-label="设计树"><Icon name="treestar" /></QuickButton>
          <QuickButton $w={8} aria-label="自定义"><svg width="8" height="8" viewBox="0 0 8 8"><path d="M1 1h6" stroke="#fff" strokeWidth="1.400" /><path d="M.500 3.500h7L4 7z" fill="#fff" /></svg></QuickButton>
        </QuickBar>
        <WindowTitle>CAXA 3D 实体设计2021 - [设计1*]</WindowTitle>
        <WindowControls>
          <WindowButton aria-label="最小化"><MinimizeGlyph /></WindowButton>
          <WindowButton aria-label="还原"><RestoreGlyph /></WindowButton>
          <WindowButton aria-label="关闭"><CloseGlyph /></WindowButton>
        </WindowControls>
      </TitleBar>

      <TabBar>
        <TabList>
          {tabs.map((t) => <RibbonTab key={t} $active={t === "特征"} $first={t === "菜单"}>{t}</RibbonTab>)}
        </TabList>
        <CommandSearch>
          <Icon name="bulb" size={14} />
          <CommandInput placeholder="功能搜索..." aria-label="功能搜索" />
        </CommandSearch>
        <ChildControls>
          <button>风格</button>
          <button aria-label="风格选项"><Caret color="#fff" size={6} /></button>
          <button aria-label="帮助"><Icon name="help" size={14} /></button>
          <button aria-label="帮助选项"><Caret color="#fff" size={6} /></button>
          <button aria-label="最小化文档"><MinimizeGlyph /></button>
          <button aria-label="还原文档"><RestoreGlyph /></button>
          <button aria-label="关闭文档"><CloseGlyph /></button>
        </ChildControls>
      </TabBar>

      <Ribbon>
        <Group $w={70}>
          <GroupTools $pad={8}><Big icon="plane" label="基准平面" w={56} menu /></GroupTools>
          <GroupLabel>参考</GroupLabel>
        </Group>
        <Group $w={192}>
          <GroupTools $pad={9}>
            <Big icon="extrude" label="拉伸" w={36} menu />
            <Tools items={[["revolve", "旋转", "menu"], ["sweep", "扫描", "menu"], ["loft", "放样", "menu"]]} />
            <Tools items={[["thread", "螺纹"], ["thicken", "加厚"], ["hole", "自定义孔"]]} />
          </GroupTools>
          <GroupLabel>特征</GroupLabel>
        </Group>
        <Group $w={91}>
          <GroupTools $pad={18}><Big icon="box" label="长方体" w={52} menu /></GroupTools>
          <GroupLabel>快速生成图素</GroupLabel>
        </Group>
        <Group $w={359}>
          <GroupTools $pad={7}>
            <Big icon="fillet" label="圆角过渡" w={53} />
            <Big icon="chamfer" label="边倒角" w={39} />
            <Tools items={[["draft", "面拔模"], ["shell", "抽壳"], ["boolean", "布尔"]]} />
            <Tools items={[["split", "分割"], ["pull", "拉伸零件/装配体"], ["delbody", "删除体", "off"]]} />
            <Tools items={[["rib", "筋板"], ["trim", "裁剪"], ["offset", "偏移", "menu"]]} />
          </GroupTools>
          <GroupLabel>修改</GroupLabel>
        </Group>
        <Group $w={155}>
          <GroupTools $pad={7}>
            <Big icon="pattern" label="阵列特征" w={54} />
            <Tools items={[["scale", "缩放体"], ["copybody", "拷贝体", "off"], ["mirror", "镜像特征", "menu"]]} />
          </GroupTools>
          <GroupLabel>变换</GroupLabel>
        </Group>
        <Group $w={193}>
          <GroupTools $pad={9}>
            <Tools items={[["facemove", "表面移动"], ["facematch", "表面匹配"], ["faceoffset", "表面等距"]]} />
            <Tools items={[["facedelete", "删除表面"], ["faceradius", "编辑表面半径", "off"], ["facesplit", "分割实体表面"]]} />
          </GroupTools>
          <GroupLabel>直接编辑</GroupLabel>
        </Group>
      </Ribbon>

      <Work>
        <Documents>
          <DocStrip>
            <DocTab>
              <svg width="101" height="19" viewBox="0 0 101 19" aria-hidden="true"><path d="M0 19Q6 15 11 9T21 .500H98q2 0 2 2V19" fill="#fdfdfd" stroke="#9a9a9a" /></svg>
              <DocTabContent>
                <span>设计1*</span>
                <button aria-label="关闭设计1"><svg width="9" height="9" viewBox="0 0 9 9"><path d="M1 1l7 7M8 1L1 8" stroke="#666" strokeWidth="1.500" /></svg></button>
              </DocTabContent>
            </DocTab>
            <StripMenu aria-label="文档列表"><Caret color="#666" size={9} /></StripMenu>
          </DocStrip>
          <DocRow>
            <SidePanel $w={208}>
              <PanelHeader $h={25}><h2>设计环境</h2><Caret size={9} color="#666" /><Icon name="pin" size={14} /></PanelHeader>
              <SearchRow>
                <SearchField placeholder="搜索..." aria-label="搜索设计环境" />
                <ClearButton aria-label="清除"><Icon name="xred" /></ClearButton>
                <TreeIconButton aria-label="过滤"><Icon name="treestar" /></TreeIconButton>
              </SearchRow>
              <TreeBox>
                <ul>
                  <TreeRow><svg width="16" height="16" viewBox="0 0 16 16" aria-hidden="true"><Spider /></svg><TreeLabel>设计1</TreeLabel></TreeRow>
                  {treeItems.map((t) => (
                    <TreeRow key={t.label} $child>
                      <Expand /><Icon name={t.icon} /><TreeLabel $selected={t.selected}>{t.label}</TreeLabel>
                    </TreeRow>
                  ))}
                </ul>
                <HScroll>
                  <ScrollArrow aria-label="向左滚动"><svg width="8" height="8" viewBox="0 0 8 8"><path d="M6 0L2 4l4 4" stroke="#444" strokeWidth="2" fill="none" /></svg></ScrollArrow>
                  <ScrollThumb />
                </HScroll>
              </TreeBox>
              <PanelTabs $gap={4} $pad={3}>
                <PanelTab $active><Icon name="tree" />设计环境</PanelTab>
                <PanelTab><Icon name="props" />属性</PanelTab>
                <PanelTab><Icon name="search" />搜索</PanelTab>
              </PanelTabs>
            </SidePanel>
            <Splitter $w={6} />
            <Viewport><Beam /></Viewport>
          </DocRow>
        </Documents>
        <Splitter $w={5} />
        <SidePanel $w={206}>
          <PanelHeader $h={26}><h2>设计元素库1</h2><Caret size={9} color="#666" /><Icon name="pin" size={14} /></PanelHeader>
          <LibToolbar>
            <LibButton><Icon name="libnew" />新建</LibButton>
            <LibButton><Icon name="libopen" />打开</LibButton>
            <LibButton><Icon name="libsave" />保存</LibButton>
            <LibButton><Icon name="libclose" />关闭</LibButton>
          </LibToolbar>
          <SearchRow $white>
            <SearchField placeholder="搜索..." aria-label="搜索元素库" />
            <ClearButton aria-label="清除"><Icon name="xred" /></ClearButton>
          </SearchRow>
          <LibList>
            <LibItem>
              <svg width="12" height="31" viewBox="0 0 12 31" aria-hidden="true"><path d="M1 2l4-2 6 1v10l-1 18-5 2-4-1V12z" fill="#000" /><path d="M6 4l4-2v13l-1 13-3 1z" fill="#5a5a4c" /></svg>
              <span>HW100X1...</span>
              <span>型钢</span>
            </LibItem>
          </LibList>
          <LibToolbar>
            <LibButton $grow={58} $muted disabled><Icon name="back" />返回</LibButton>
            <LibButton $grow={120}>更多图素库</LibButton>
            <LibButton $grow={21} $muted disabled aria-label="空白" />
          </LibToolbar>
          <PanelTabs $gap={2} $pad={5}>
            <PanelTab $active>设计元素库1</PanelTab>
            <PanelTab>工具</PanelTab>
            <PanelTab>图素</PanelTab>
            <MoreTabs aria-label="更多标签"><svg width="8" height="8" viewBox="0 0 8 8"><path d="M0 1h8" stroke="#666" strokeWidth="1.500" /><path d="M0 3h8L4 7.500z" fill="#666" /></svg></MoreTabs>
          </PanelTabs>
        </SidePanel>
      </Work>

      <StatusBar>
        <SiteLink href="#caxa">www.caxa.com</SiteLink>
        <StatusRight>
          <StatusText $gap={14}>视图尺寸: 1497 x  835</StatusText>
          <Icon name="ruler" />
          <StatusText $gap={12} $dark> 单位:</StatusText>
          <StatusText $gap={12}>mm, deg</StatusText>
          <StatusTools>
            <StatusTool aria-label="全部显示"><Icon name="zoomdoc" /></StatusTool>
            <StatusTool aria-label="窗口缩放"><Icon name="zoomdoc" /></StatusTool>
            <StatusCaret aria-label="缩放选项"><Caret size={6} /></StatusCaret>
            <StatusTool aria-label="视向"><Icon name="yellowcube" /></StatusTool>
            <StatusCaret aria-label="视向选项"><Caret size={6} /></StatusCaret>
            <StatusTool aria-label="显示面"><Icon name="bluecubeopen" /></StatusTool>
            <StatusCaret aria-label="显示面选项"><Caret size={6} /></StatusCaret>
            <StatusTool aria-label="保存视向"><Icon name="viewsave" /></StatusTool>
            <StatusCaret aria-label="保存视向选项"><Caret size={6} /></StatusCaret>
            <StatusTool aria-label="透视"><Icon name="wedge" /></StatusTool>
            <StatusTool aria-label="显示"><Icon name="glasses" /></StatusTool>
            <StatusCaret aria-label="显示选项"><Caret size={6} /></StatusCaret>
            <StatusTool aria-label="渲染"><Icon name="bluecube" /></StatusTool>
            <StatusCaret aria-label="渲染选项"><Caret size={6} /></StatusCaret>
            <StatusTool aria-label="重复"><Icon name="redocursor" /></StatusTool>
            <StatusTool $active aria-label="选择"><Icon name="cursor" /></StatusTool>
            <StatusTool aria-label="框选"><Icon name="cursorbox" /></StatusTool>
          </StatusTools>
          <Pick $w={90}><PickSelect disabled aria-label="拾取"><option>缺省</option></PickSelect><Caret color="#aaa" size={5} /></Pick>
          <Pick $w={141}><PickSelect aria-label="过滤"><option>任意</option></PickSelect><Caret size={5} /></Pick>
          <Pick $w={181}><PickSelect $small aria-label="配置"><option>Default</option></PickSelect><Caret size={5} /></Pick>
          <StatusTool aria-label="结构"><Icon name="nodes" size={14} /></StatusTool>
        </StatusRight>
      </StatusBar>

      <Taskbar>
        {taskIcons.map((t) => <TaskButton key={t.label} aria-label={t.label} $running={t.running} $active={t.active}>{t.art}</TaskButton>)}
        <Tray>
          <Weather>
            <svg width="22" height="15" viewBox="0 0 22 15"><path d="M5 15a5 5 0 0 1 0-9Q6 0 12 0q5 0 6 5 4 1 4 5t-4 5z" fill="#b7dcf8" /><path d="M5 6Q7 1 12 1q4 0 5 4-4 1-5 5Q10 6 5 6z" fill="#e8f5ff" /></svg>
            <span>28°C&nbsp;&nbsp;空气良 62</span>
          </Weather>
          <svg width="14" height="14" viewBox="0 0 14 14"><path d="M2 9l5-5 5 5" stroke="#fff" fill="none" strokeWidth="1.400" /></svg>
          <svg width="16" height="16" viewBox="0 0 16 16" fill="none" stroke="#cdd4dc" strokeWidth="1.300"><path d="M1 13A14 14 0 0 1 14 2M4.500 14A10 10 0 0 1 14 6M8 14.500A6 6 0 0 1 14 10M11.500 15A3 3 0 0 1 14 13" /></svg>
          <svg width="17" height="16" viewBox="0 0 17 16" fill="none" stroke="#fff" strokeWidth="1.200"><path d="M1 6h2l3-3v10L3 10H1zM8.500 6q1.500 2 0 4M11 4q3 4 0 8M13.500 2.500q4 5.500 0 11" /></svg>
          <span>中</span>
          <svg width="16" height="16" viewBox="0 0 16 16"><path d="M0 2l13-2 3 13-13 3z" fill="#f2501e" /><path d="M12 4Q6 2.500 4.500 5T9 8t2.500 2.500T4 12" stroke="#fff" strokeWidth="2" fill="none" /></svg>
          <Clock>7:36:19<br />2021/11/17</Clock>
        </Tray>
      </Taskbar>

      <ContextMenu role="menu">
        {menuSections.map((section, i) => (
          <React.Fragment key={section[0].label}>
            {i > 0 && <MenuRule />}
            {section.map((m) => (
              <MenuRow key={m.label} role="menuitem" disabled={m.off} $hover={m.hover} $sub={m.sub}>
                {m.icon ? <Icon name={m.icon} /> : <span />}
                <span>{m.label}</span>
                {m.keys && <kbd>{m.keys}</kbd>}
                {m.sub && <svg width="6" height="10" viewBox="0 0 6 10"><path d="M0 0l6 5-6 5z" fill="#333" /></svg>}
              </MenuRow>
            ))}
          </React.Fragment>
        ))}
      </ContextMenu>

      <Annotation width="164" height="48" viewBox="0 0 164 48" aria-hidden="true">
        <ellipse cx="82" cy="24" rx="79" ry="21" fill="none" stroke="#f5260f" strokeWidth="3" />
      </Annotation>

      <TopHandle />
      <SpeedWidget>
        <SpeedLogo>
          <svg width="20" height="16" viewBox="0 0 20 16" fill="none" stroke="#fff" strokeWidth="2.600"><circle cx="10" cy="4.800" r="3.400" /><circle cx="4.800" cy="11" r="3.400" /><circle cx="15.200" cy="11" r="3.400" /></svg>
        </SpeedLogo>
        <SpeedValue>
          <svg width="9" height="11" viewBox="0 0 9 11"><path d="M4.500 0L9 4.500H6V11H3V4.500H0z" fill="#0a90e8" /></svg>
          <span>1.3 MB/s</span>
        </SpeedValue>
      </SpeedWidget>

      <ImeBar>
        <ImeLogo width="32" height="32" viewBox="0 0 32 32" aria-hidden="true">
          <path d="M3 5L23 1q2 0 3 2l5 20q0 2-2 3L8 31q-2 0-3-2L1 8q0-2 2-3z" fill="#f2551f" />
          <path d="M25 9Q12 5 8.500 10.500 7 15 16 16q9 1 7 5.500Q19 27 7 23.500" stroke="#fff" strokeWidth="4" fill="none" />
        </ImeLogo>
        <ImeKey>中</ImeKey>
        <ImeKey aria-label="标点"><svg width="14" height="12" viewBox="0 0 14 12"><circle cx="3" cy="3" r="2" fill="none" stroke="#0a70dc" strokeWidth="1.600" /><path d="M8 6a2.200 2.200 0 1 1 4 1q0 3-3 4 1-1.500.5-2.500Q8 8 8 6z" fill="#0a70dc" /></svg></ImeKey>
        <ImeKey aria-label="语音"><svg width="14" height="17" viewBox="0 0 14 17"><rect x="4" y="0" width="6" height="10" rx="3" fill="#0a70dc" /><path d="M1.500 7q0 5.500 5.500 5.500T12.500 7M7 12.500V14M4.500 16h5" stroke="#0a70dc" strokeWidth="1.600" fill="none" /></svg></ImeKey>
        <ImeKey aria-label="键盘"><svg width="15" height="13" viewBox="0 0 15 13"><rect x=".800" y=".800" width="13.400" height="11.400" rx="1" fill="none" stroke="#0a70dc" strokeWidth="1.600" /><path d="M3 4h9M3 6.500h9" stroke="#0a70dc" strokeWidth="1.500" strokeDasharray="1.500 1" /><path d="M4 9.500h7" stroke="#0a70dc" strokeWidth="1.500" /></svg></ImeKey>
        <ImeKey aria-label="工具箱"><svg width="14" height="14" viewBox="0 0 14 14" fill="#0a70dc"><rect width="6" height="6" rx="1.500" /><rect y="7.500" width="6" height="6" rx="1.500" /><rect x="7.500" y="7.500" width="6" height="6" rx="1.500" /><circle cx="10.500" cy="3" r="2.200" fill="none" stroke="#0a70dc" strokeWidth="1.600" /></svg></ImeKey>
      </ImeBar>

      <Watermark>咖迷社区<span> | CAXA</span>数码大方</Watermark>
    </Shell>
  );
}
